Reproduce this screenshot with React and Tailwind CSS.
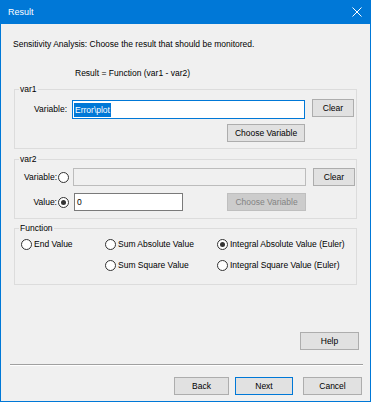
const Radio = ({ checked }) => (
  <span className="w-[11px] h-[11px] rounded-full border border-[#333333] bg-white flex items-center justify-center shrink-0">
    {checked && <span className="w-[5px] h-[5px] rounded-full bg-[#333333]" />}
  </span>
);

const Btn = ({ children, className = "", disabled = false, primary = false }) => (
  <button
    className={`h-[18px] flex items-center justify-center border leading-none ${
      disabled
        ? "bg-[#cccccc] border-[#bfbfbf] text-[#838383]"
        : primary
        ? "bg-[#e1e1e1] border-[#0078d7]"
        : "bg-[#e1e1e1] border-[#adadad]"
    } ${className}`}
  >
    {children}
  </button>
);

const Group = ({ title, children, className = "" }) => (
  <fieldset className={`mx-[13px] border border-[#dcdcdc] ${className}`}>
    <legend className="ml-[4px] px-[1px] leading-[12px]">{title}</legend>
    {children}
  </fieldset>
);

const FuncOption = ({ label, checked }) => (
  <div className="flex items-center h-[14px] gap-[1px]">
    <Radio checked={checked} />
    <span className="ml-[1px]">{label}</span>
  </div>
);

export default function App() {
  return (
    <div className="w-[371px] h-[402px] bg-[#0078d7] px-[1px] pb-[1px] flex flex-col font-['Liberation_Sans',Arial,sans-serif] text-[8.5px] text-black leading-[12px] overflow-hidden">
      {/* title bar */}
      <div className="h-[24px] flex items-center justify-between pl-[7px] pr-[7px] text-white text-[9px]">
        <span>Result</span>
        <svg width="10" height="10" viewBox="0 0 10 10" className="mr-[1px]">
          <path d="M0.5 0.5 L9.5 9.5 M9.5 0.5 L0.5 9.5" stroke="white" strokeWidth="1" />
        </svg>
      </div>

      <div className="flex-1 bg-[#f0f0f0] flex flex-col">
        <div className="mt-[14px] pl-[12px]">Sensitivity Analysis: Choose the result that should be monitored.</div>
        <div className="mt-[17px] pl-[74px]">Result = Function (var1 - var2)</div>

        {/* var1 */}
        <Group title="var1" className="mt-[4px] pb-[6px]">
          <div className="flex items-start mt-[4px]">
            <span className="w-[52px] text-right mt-[4px]">Variable:</span>
            <div className="ml-[5px] mt-[1px] w-[233px] h-[19px] border border-[#0078d7] bg-white flex items-center pl-[1px]">
              <span className="bg-[#0078d7] text-white px-[1px] leading-[14px]">Error\plot</span>
            </div>
            <Btn className="ml-[7px] w-[42px]">Clear</Btn>
          </div>
          <div className="flex mt-[5px]">
            <Btn className="ml-[212px] w-[78px]">Choose Variable</Btn>
          </div>
        </Group>

        {/* var2 */}
        <Group title="var2" className="mt-[4px] pb-[7px]">
          <div className="flex items-center mt-[3px] h-[18px]">
            <span className="w-[42px] text-right">Variable:</span>
            <span className="ml-[1px]"><Radio /></span>
            <div className="ml-[4px] w-[233px] h-[18px] border border-[#bcbcbc] bg-[#f0f0f0]" />
            <Btn className="ml-[7px] w-[42px]">Clear</Btn>
          </div>
          <div className="flex items-center mt-[7px] h-[18px]">
            <span className="w-[42px] text-right">Value:</span>
            <span className="ml-[1px]"><Radio checked /></span>
            <div className="ml-[5px] w-[109px] h-[18px] border border-[#7a7a7a] bg-white flex items-center pl-[2px]">0</div>
            <Btn disabled className="ml-[44px] w-[79px]">Choose Variable</Btn>
          </div>
        </Group>

        {/* function */}
        <Group title="Function" className="mt-[3px] pb-[12px]">
          <div className="grid grid-cols-[84px_112px_1fr] pl-[6px] mt-[3px] gap-y-[7px]">
            <FuncOption label="End Value" />
            <FuncOption label="Sum Absolute Value" />
            <FuncOption label="Integral Absolute Value (Euler)" checked />
            <div />
            <FuncOption label="Sum Square Value" />
            <FuncOption label="Integral Square Value (Euler)" />
          </div>
        </Group>

        <div className="flex justify-end mt-[47px] mr-[11px]">
          <Btn className="w-[59px] h-[17px]">Help</Btn>
        </div>

        <div className="mt-[14px] ml-[9px] mr-[7px] h-[2px] border-t border-[#a0a0a0] border-b border-b-white" />

        <div className="flex justify-end mt-[11px] mr-[8px] gap-[6px]">
          <Btn className="w-[55px] h-[17px]">Back</Btn>
          <Btn primary className="w-[58px] h-[17px] mr-[4px]">Next</Btn>
          <Btn className="w-[59px] h-[17px]">Cancel</Btn>
        </div>
      </div>
    </div>
  );
}
